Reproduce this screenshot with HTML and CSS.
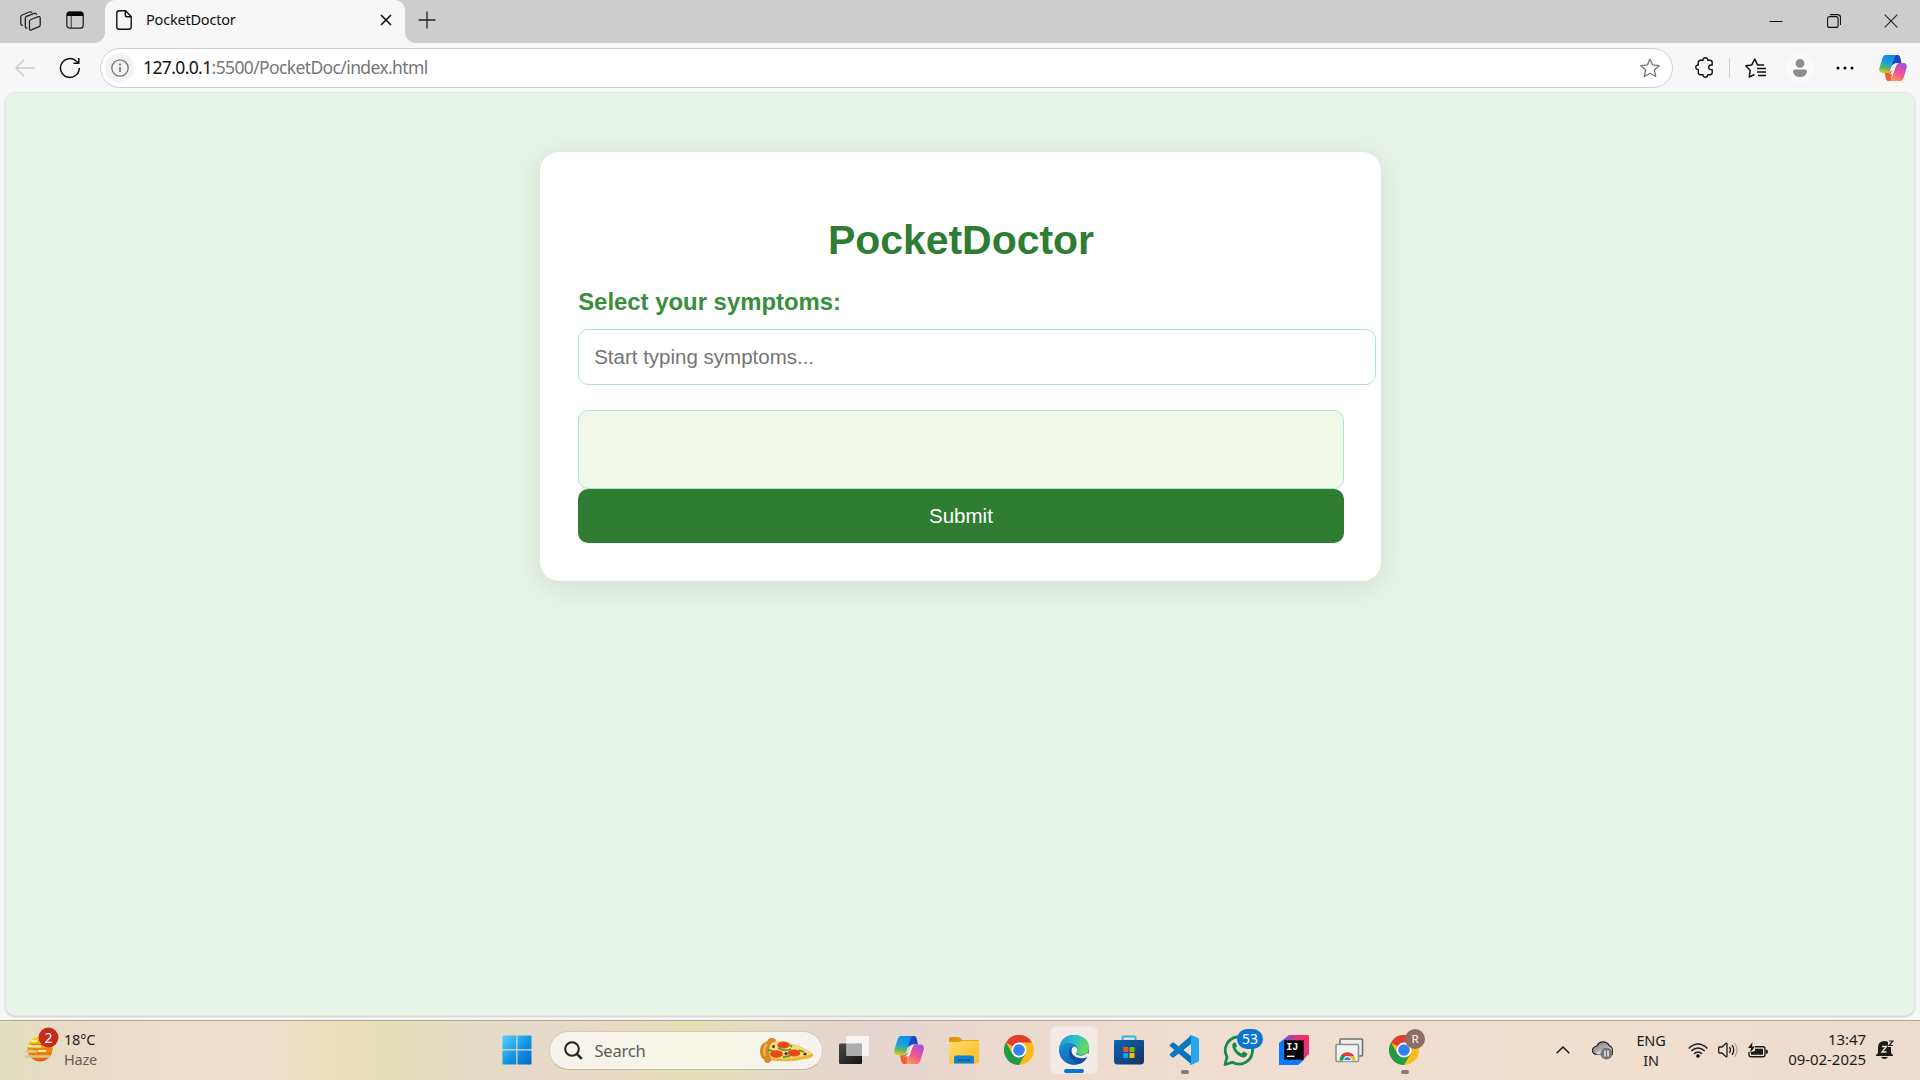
FILE: index.html
```html
<!DOCTYPE html>
<html lang="en">
<head>
<meta charset="utf-8">
<title>PocketDoctor</title>
<link rel="stylesheet" href="styles.css">
</head>
<body>
<svg class="defs" aria-hidden="true">
  <defs>
    <linearGradient id="cpBlue" x1="0.4" y1="0" x2="0.2" y2="1"><stop offset="0" stop-color="#0f8bea"/><stop offset=".4" stop-color="#1ba0dc"/><stop offset=".7" stop-color="#55b66c"/><stop offset="1" stop-color="#f0cd14"/></linearGradient>
    <linearGradient id="cpPink" x1="0.8" y1="0" x2="0.3" y2="1"><stop offset="0" stop-color="#a04fe8"/><stop offset=".5" stop-color="#ee5096"/><stop offset="1" stop-color="#fb9658"/></linearGradient>
    <linearGradient id="win" x1="0" y1="0" x2="1" y2="1"><stop offset="0" stop-color="#52d3fb"/><stop offset=".5" stop-color="#1798e5"/><stop offset="1" stop-color="#0067c9"/></linearGradient>
    <linearGradient id="sun" x1="0" y1="0" x2="0" y2="1"><stop offset="0" stop-color="#ffd400"/><stop offset="1" stop-color="#e85c08"/></linearGradient>
    <linearGradient id="fold" x1="0" y1="0" x2="1" y2="1"><stop offset="0" stop-color="#ffdc70"/><stop offset="1" stop-color="#fbbb1e"/></linearGradient>
    <linearGradient id="edgeTop" x1="0" y1="0" x2="1" y2="0.4"><stop offset="0" stop-color="#168fd2"/><stop offset=".5" stop-color="#2bbfd3"/><stop offset="1" stop-color="#63dc57"/></linearGradient>
    <linearGradient id="edgeLow" x1="0" y1="0" x2="0.6" y2="1"><stop offset="0" stop-color="#1c9ee4"/><stop offset="1" stop-color="#0d5fae"/></linearGradient>
    <linearGradient id="store" x1="0" y1="0" x2="1" y2="1"><stop offset="0" stop-color="#0d66b8"/><stop offset="1" stop-color="#17305f"/></linearGradient>
    <linearGradient id="ij" x1="0" y1="0.7" x2="1" y2="0.1"><stop offset="0" stop-color="#087cfa"/><stop offset=".35" stop-color="#4a61d8"/><stop offset=".7" stop-color="#e9307c"/><stop offset="1" stop-color="#fb2c62"/></linearGradient>
    <linearGradient id="dark" x1="0" y1="0" x2="1" y2="1"><stop offset="0" stop-color="#484848"/><stop offset="1" stop-color="#151515"/></linearGradient>
    <linearGradient id="cloud" x1="0" y1="0" x2="1" y2="1"><stop offset="0" stop-color="#777"/><stop offset="1" stop-color="#ddd"/></linearGradient>
    <symbol id="copilot" viewBox="0 0 30 28">
      <path d="M17 0h3c2 0 2.600 1.500 3.200 4.200L24 8.500h-6l-5 3z" fill="#1949c8"/>
      <path d="M7 0h12c-1.800 0-2.600 2-3.200 4.500L12.500 15c-.900 3-2 4.300-4.500 4.300H4C.500 19.300-.400 16.800.500 13.500L3.500 3.700C4.300 1.300 5.300 0 7 0z" fill="url(#cpBlue)"/>
      <path d="M13 28h-3c-2 0-2.600-1.800-3.200-4.500L6 19.200h3c2.500 0 3.500-2 5-3z" fill="#f26334"/>
      <path d="M23 28H11c1.800 0 2.600-2 3.200-4.500L17.500 13c.900-3 2-4.500 4.500-4.500h4c3.500 0 4.400 2.500 3.500 5.800l-3 10C25.700 26.700 24.700 28 23 28z" fill="url(#cpPink)"/>
      <path d="M17.500 10q1-1.500 3.500-1.500-2 1-3 4l-2 6q-.800 2-3 2h-2q2-.500 3-4z" fill="#f6ece8"/>
    </symbol>
    <symbol id="chrome" viewBox="0 0 30 30">
      <circle cx="15" cy="15" r="15" fill="#fbbc16"/>
      <path d="M15 15L2 7.500A15 15 0 0 1 28 7.500H15z" fill="#e33b2e"/>
      <path d="M2 7.500A15 15 0 0 0 15 30L21.500 18.700 8.500 18.700z" fill="#229a4c"/>
      <circle cx="15" cy="15" r="7.500" fill="#fff"/><circle cx="15" cy="15" r="5.800" fill="#3181ee"/>
    </symbol>
  </defs>
</svg>

<div class="screen">
  <header class="tabstrip">
    <svg class="workspaces" width="21" height="20" viewBox="0 0 21 20"><g fill="none" stroke="#222" stroke-width="1.300" stroke-linejoin="round" stroke-linecap="round"><path d="M11 8.500l7.300-2.800q1.900-.600 1.900 1.200v7q0 1.300-1.200 1.800l-7.500 3.200q-2 .700-2-1.300v-7.200q0-1.400 1.500-1.900z"/><path d="M6.800 17q-1.500 0-1.500-1.800V7.500q0-1.600 1.200-2.200l7.800-3q1.700-.500 2.200 1"/><path d="M2.500 14.300Q.800 14 .800 12.500V6q0-1.400 1.400-2L9.500 1q1.500-.500 2.200.3"/></g></svg>
    <svg class="tabactions" width="18" height="18" viewBox="0 0 18 18"><rect x=".8" y=".8" width="16.400" height="16.400" rx="3" fill="none" stroke="#222" stroke-width="1.300"/><path d="M1 5V3q0-2 2-2h12q2 0 2 2v2z" fill="#000"/><path d="M5.200 5v12" stroke="#333"/></svg>
    <div class="tab">
      <svg width="16" height="20" viewBox="0 0 16 20"><path d="M3 .800h6.500L15.200 6.500V17q0 2.200-2.200 2.200H3Q.800 19.200.800 17V3Q.800.800 3 .800zM9.300 1v4.200q0 1.500 1.500 1.500H15" fill="none" stroke="#111" stroke-width="1.400"/></svg>
      <span class="tab-title">PocketDoctor</span>
      <svg width="12" height="12" viewBox="0 0 12 12"><path d="M1 1l10 10M11 1L1 11" stroke="#111" stroke-width="1.600"/></svg>
    </div>
    <svg class="plus" width="18" height="18" viewBox="0 0 18 18"><path d="M9 .500v17M.500 9h17" stroke="#222" stroke-width="1.300"/></svg>
    <div class="window-controls">
      <svg width="14" height="14" viewBox="0 0 14 14"><path d="M.500 7.500h13" stroke="#111"/></svg>
      <svg width="14" height="14" viewBox="0 0 14 14"><rect x=".6" y="2.600" width="10.500" height="10.800" rx="2" fill="none" stroke="#111" stroke-width="1.100"/><path d="M3 .600h7.500q3 0 3 3V11" fill="none" stroke="#111" stroke-width="1.100"/></svg>
      <svg width="14" height="14" viewBox="0 0 14 14"><path d="M.700.700l12.600 12.600M13.300.700L.700 13.300" stroke="#222" stroke-width="1.100"/></svg>
    </div>
  </header>

  <nav class="toolbar">
    <svg class="back" width="20" height="18" viewBox="0 0 20 18"><path d="M9 .700L1 9l8 8.300M1 9h19" fill="none" stroke="#cbcbcb" stroke-width="1.400"/></svg>
    <svg class="reload" width="22" height="22" viewBox="0 0 22 22"><path d="M20.300 11a9.400 9.400 0 1 1-2.600-6.500L19.500 6" fill="none" stroke="#111" stroke-width="1.500"/><path d="M19.800 1v5.300h-5.300" fill="none" stroke="#111" stroke-width="1.500"/></svg>
    <div class="address">
      <span class="site-info"><svg width="18" height="18" viewBox="0 0 18 18"><circle cx="9" cy="9" r="8.200" fill="none" stroke="#747474" stroke-width="1.300"/><path d="M9 8v5" stroke="#666" stroke-width="1.500"/><circle cx="9" cy="5.500" r="1" fill="#666"/></svg></span>
      <span class="url"><b>127.0.0.1</b>:5500/PocketDoc/index.html</span>
      <svg width="20" height="20" viewBox="0 0 20 20"><path d="M10 1l2.700 5.900 6.500.800-4.800 4.400 1.300 6.400L10 15.300l-5.700 3.200 1.300-6.400L.800 7.700l6.500-.800z" fill="none" stroke="#777" stroke-width="1.300" stroke-linejoin="round"/></svg>
    </div>
    <svg class="extensions" width="20" height="21" viewBox="0 0 20 21"><path d="M5.500 3.300H8Q7.800.800 10.300.800t2.400 2.500H15q2.200 0 2.200 2.200V8H16q-2.300 0-2.300 2.300T16 12.600h1.200v3q0 2.200-2.200 2.200h-2.300q0 2.400-2.400 2.400T8 17.800H5.500q-2.200 0-2.200-2.200v-3Q.800 12.600.800 10.300T3.300 8V5.500q0-2.200 2.200-2.200z" fill="none" stroke="#111" stroke-width="1.400" stroke-linejoin="round"/></svg>
    <i class="divider"></i>
    <svg class="favorites" width="21" height="20" viewBox="0 0 21 20"><path d="M9.500 16.500L4.200 19l1-6.400L.800 7.800l6-.900L9.800 1l2.800 5.900h6.500M12 10.500h9M12 14h9M13 17.500h8" fill="none" stroke="#111" stroke-width="1.500" stroke-linejoin="round"/></svg>
    <span class="profile"><svg width="14" height="18" viewBox="0 0 14 18"><circle cx="7" cy="4.500" r="4.400" fill="#8d8d8d"/><path d="M2 10.500h10q2 0 2 2Q13 18 7 18T0 12.500q0-2 2-2z" fill="#8d8d8d"/></svg></span>
    <svg class="more" width="18" height="4" viewBox="0 0 18 4"><circle cx="2" cy="2" r="1.500"/><circle cx="9" cy="2" r="1.500"/><circle cx="16" cy="2" r="1.500"/></svg>
    <svg class="copilot" width="28" height="26"><use href="#copilot"/></svg>
  </nav>

  <main class="page">
    <section class="card">
      <h1>PocketDoctor</h1>
      <label for="symptom">Select your symptoms:</label>
      <input id="symptom" type="text" placeholder="Start typing symptoms...">
      <div class="selected"></div>
      <button type="button">Submit</button>
    </section>
  </main>

  <footer class="taskbar">
    <div class="weather">
      <svg width="35" height="36" viewBox="0 0 35 36"><circle cx="15" cy="22" r="12.500" fill="url(#sun)"/><path d="M7 14h4M4 19.300h11M14 24h6M4 24h4" stroke="#f9e8a6" stroke-width="2.400" stroke-linecap="round"/><path d="M6 17.500h13M3 22h25M8 26h18" stroke="#d97913" stroke-width="1"/><path d="M1 24.500h10M1 29.500h23" stroke="#dbc38b" stroke-width="2.400" stroke-linecap="round"/><circle cx="23.500" cy="10.500" r="10" fill="#c42b1c"/><text x="23.500" y="15.500" class="badge-text">2</text></svg>
      <div class="stack"><span>18°C</span><span class="dim">Haze</span></div>
    </div>

    <div class="apps">
      <span class="app"><svg width="30" height="30" viewBox="0 0 30 30"><path d="M1.500.500H14.300V14.300H.500V1.500q0-1 1-1zM15.500.500H28.500q1 0 1 1V14.300H15.500zM.500 15.500H14.300V29.500H1.500q-1 0-1-1zM15.500 15.500H29.500V28.500q0 1-1 1H15.500z" fill="url(#win)"/></svg></span>
      <div class="search">
        <svg width="19" height="19" viewBox="0 0 19 19"><circle cx="8" cy="8" r="6.800" fill="none" stroke="#222" stroke-width="2"/><path d="M12.800 12.800l5 5" stroke="#222" stroke-width="2.400"/></svg>
        <span>Search</span>
        <svg width="55" height="27" viewBox="0 0 55 27"><path d="M7 4Q35 3 54 17q1 3-5 4.500Q30 26 8 23z" fill="#f0b334"/><path d="M9 4Q35 4 53 17q-12 4-27 4.500Q14 22 8 21 6 12 9 4z" fill="#fbdc78"/><path d="M13 1q4 0 4 4-5-.500-6 4-2 8 1 12 1 4-3 5-4 0-4-4-4-1-4-8Q1 6 8 5q1-4 5-4z" fill="#d88924"/><path d="M8 7q-4 4-2 12" stroke="#f4b85b" stroke-width="2" fill="none"/><g fill="#e8481a"><ellipse cx="24.500" cy="8" rx="6.200" ry="3.500"/><ellipse cx="17.500" cy="17" rx="6.500" ry="3.800"/><ellipse cx="35" cy="16" rx="6.500" ry="3.500"/></g><path d="M19 11q6 4 13 1M24 20l7-1M9 13l5 1M40 13l5 2M31 8l2 2" stroke="#569b24" stroke-width="1.800" fill="none"/><g fill="#493052"><circle cx="14.500" cy="9.500" r="1.500"/><circle cx="27" cy="16.500" r="1.600"/><circle cx="46" cy="17" r="1.600"/></g></svg>
      </div>
      <span class="app"><svg width="30" height="28" viewBox="0 0 30 28"><rect y="7.500" width="23" height="20.500" rx="1.200" fill="url(#dark)"/><rect x="7.300" width="22.700" height="20" rx="1.200" fill="#fcfcfc" opacity=".8"/><path d="M7.300 7.500H23V20H7.300z" fill="#999" opacity=".65"/></svg></span>
      <span class="app"><svg width="30" height="28"><use href="#copilot"/></svg></span>
      <span class="app"><svg width="30" height="28" viewBox="0 0 30 28"><path d="M0 6V2.500Q0 1 1.500 1H9q1 0 1.800.800L13 4h15.500Q30 4 30 5.500V8H0z" fill="#db9b08"/><path d="M0 6h9q1.500 0 2.500-.700T14 4.700h14.500q1.500 0 1.500 1.500V26q0 1.500-1.500 1.500h-27Q0 27.500 0 26z" fill="url(#fold)"/><path d="M5 27.500V22q0-2.500 2.500-2.500h15Q25 19.500 25 22v5.500z" fill="#1180d2"/><path d="M8.500 24h13" stroke="#0a5795" stroke-width="1.400"/></svg></span>
      <span class="app"><svg width="30" height="30"><use href="#chrome"/></svg></span>
      <span class="app"><span class="tile"><svg width="30" height="30" viewBox="0 0 30 30"><circle cx="15" cy="15" r="15" fill="url(#edgeLow)"/><path d="M.300 12.500Q2.500 0 15 0q15 1 15 12.500c0 6.500-6 8.500-10.500 7q-2.500-1-1-3 1.500-2.500-.500-5Q15 8 10 8 3.500 8 .300 12.500z" fill="url(#edgeTop)"/><path d="M13 11.500Q8.500 16 11 21.500 14 28 21 28.700 26 26.500 28.300 22q-2 1-5 1.300-7 .500-10-4.500-1.800-3.500-.300-7.300z" fill="#124f98"/><path d="M14.500 11.500q4 0 4 3.500 0 1-.800 2.200-1.200 2 1.300 3 5 1.500 9.500-2.200L30 19q-.500 2-1.500 3-4.500 2-9 .800-7-1.800-7-7.300 0-2.500 2-4z" fill="#f5ebe6"/></svg><i class="bar"></i></span></span>
      <span class="app"><svg width="30" height="30" viewBox="0 0 30 30"><path d="M8.500 6V2.500Q8.500 1.500 9.500 1.500h11q1 0 1 1V6" fill="none" stroke="#28b6ee" stroke-width="2"/><path d="M1 5h28q1 0 1 1v20q0 3.500-3.500 3.500h-23Q0 29.500 0 26V6q0-1 1-1z" fill="url(#store)"/><path d="M9.300 12h5v5h-5z" fill="#f25022"/><path d="M15.500 12h5v5h-5z" fill="#7fba00"/><path d="M9.300 18h5v5h-5z" fill="#00a4ef"/><path d="M15.500 18h5v5h-5z" fill="#ffb900"/></svg></span>
      <span class="app running"><svg width="30" height="30" viewBox="0 0 30 30"><path d="M1 9.800l2-2q1-.700 2 0L22 21v8L.800 11q-.600-.700.200-1.200z" fill="#0873b8"/><path d="M.800 19L22 .500V9L5 22.300q-1 .700-2 0l-2-2q-.800-.700-.200-1.300z" fill="#0878c0"/><path d="M22 0l7 3q1 .500 1 1.700v20.500q0 1.300-1 1.800l-7 3q-1 0-2-1 2 1 2-1V2q0-2-2-1 1-1 2-1z" fill="#25a7f0"/></svg></span>
      <span class="app"><svg width="40" height="37" viewBox="0 0 40 37" class="whatsapp"><path d="M2 35.500l2-7.500a13.600 13.600 0 1 1 5.300 5.300z" fill="none" stroke="#178c50" stroke-width="2.800" stroke-linejoin="round"/><path d="M11.500 15q-2 2-1 5 3 8 10 10 4 .500 5-4l-4-2-2 2.200q-4-1.700-6-5.700l1.500-1.800-1.500-3.700z" fill="#178c50" transform="translate(-1 -1.500)"/><rect x="14" y="0" width="26" height="20" rx="10" fill="#0877d4"/><text x="27" y="15.200" class="badge-text">53</text></svg></span>
      <span class="app"><svg width="30" height="30" viewBox="0 0 30 30"><path d="M10 0h19q1 0 1 1v18L19 30H1q-1 0-1-1V8z" fill="url(#ij)"/><path d="M0 8l5.300-1.500V25H25l-6 5H1q-1 0-1-1z" fill="#087cfa"/><path d="M5.300 5.300h19.400v19.400H5.300z"/><text x="7.200" y="15" class="ij-text">IJ</text><path d="M8 21.300h7.500" stroke="#fff" stroke-width="1.400"/></svg></span>
      <span class="app"><svg width="29" height="25" viewBox="0 0 29 25"><rect x="5" y="1" width="22.500" height="17" rx="1" fill="#eee" stroke="#707070" stroke-width="1.600"/><rect x="1" y="6.500" width="22.500" height="17" rx="1" fill="#f4f4f4" stroke="#909090" stroke-width="1.600"/><path d="M4.500 22.600a8 8 0 0 1 4-6.800l3.800 6.800z" fill="#229a4c"/><path d="M6 17.500a8 8 0 0 1 13.500 1H12z" fill="#e33b2e"/><path d="M12 18.500h7.500q1 2 .800 4.100H12z" fill="#fbbc16"/><path d="M8.500 22.700a4 4 0 0 1 8 0z" fill="#3181ee" stroke="#fff"/></svg></span>
      <span class="app running"><svg width="36" height="36" viewBox="0 0 36 36" class="chrome-profile"><use href="#chrome" x="0" y="6" width="30" height="30"/><circle cx="26" cy="10" r="10" fill="#8d6e63"/><text x="26" y="14.300" class="profile-text">R</text></svg></span>
    </div>

    <div class="tray">
      <svg class="chevron" width="14" height="8" viewBox="0 0 14 8"><path d="M.700 7.300L7 1l6.300 6.300" fill="none" stroke="#1c1c1c" stroke-width="1.500"/></svg>
      <svg class="cloud" width="21" height="19" viewBox="0 0 21 19"><path d="M5 13.500q-4.500-.500-4.500-4T5 5Q6.500.800 11 .800T17.500 5q2.500.500 3 4v4.500z" fill="url(#cloud)" stroke="#222" stroke-width="1.200"/><path d="M4 12l10-6 5.800 1.500v6H5z" fill="#d6d6d6"/><circle cx="14.500" cy="12.500" r="6" fill="#777"/><path d="M13 9.500v6M16 9.500v6" stroke="#fff" stroke-width="1.300"/></svg>
      <div class="stack language"><span>ENG</span><span>IN</span></div>
      <svg class="wifi" width="20" height="15" viewBox="0 0 20 15"><g fill="none" stroke="#1c1c1c" stroke-width="1.400"><path d="M.600 5.400q9.400-8.800 18.800 0"/><path d="M3.300 8.100q6.700-6.200 13.400 0"/><path d="M6 10.800q4-3.600 8 0"/></g><circle cx="10" cy="13" r="1.800"/></svg>
      <svg class="speaker" width="20" height="16" viewBox="0 0 20 16"><path d="M.700 5.700Q.700 5 1.500 5H4l3.700-3.500Q9 .700 9 2v12q0 1.300-1.300.500L4 11H1.500q-.800 0-.800-.700zM11.500 5.200q2 2.800 0 5.600M14 3.200q3.500 4.800 0 9.600" fill="none" stroke="#1c1c1c" stroke-width="1.300"/><path d="M16.500 1q5 7 0 14" fill="none" stroke="#aaa39b" stroke-width="1.200"/></svg>
      <svg class="battery" width="20" height="16" viewBox="0 0 20 16"><path d="M7 4.700h8q2 0 2 2v6q0 2-2 2H3q-2 0-2-2V10" fill="none" stroke="#1c1c1c" stroke-width="1.400"/><path d="M7 6.700h8v6H3V10l4-1zM18 7.500q2 0 2 2.200t-2 2.200zM4.500 0L0 6h3L2 11l5-6.500H4z" fill="#1c1c1c"/></svg>
      <div class="stack clock"><span>13:47</span><span>09-02-2025</span></div>
      <svg class="bell" width="18" height="20" viewBox="0 0 18 20"><path d="M0 15q2-1 2-3V8q0-7 6.500-7 2 0 3.500 1v5h3v5q0 2 2 3v1H0zM5 17h7q-1 2-3.500 2T5 17z" fill="#1c1c1c"/><path d="M6 6.500h4.500L6 12h4.500" fill="none" stroke="#f1dece" stroke-width="1.400"/><path d="M13 1h4l-4 4.500h4" fill="none" stroke="#1c1c1c" stroke-width="1.200"/></svg>
    </div>
  </footer>
</div>
</body>
</html>
```
FILE: styles.css
```css
* { box-sizing: border-box; }
body { margin: 0; overflow: hidden; font-family: "Noto Sans", "Open Sans", sans-serif; }
svg { display: block; flex: none; }
.defs { position: absolute; width: 0; height: 0; }
.screen { width: 1920px; height: 1080px; display: flex; flex-direction: column; background: #f7f7f7; }

.tabstrip { height: 43px; flex: none; display: flex; align-items: center; background: #cdcdcd; }
.workspaces { margin: -2px 0 0 20px; }
.tabactions { margin: -3px 0 0 25px; }
.tab { position: relative; width: 300px; height: 43px; margin-left: 21px; padding: 0 13px 3px 11px; display: flex; align-items: center; background: #f7f7f7; border-radius: 10px 10px 0 0; }
.tab::before, .tab::after { content: ""; position: absolute; bottom: 0; width: 10px; height: 10px; }
.tab::before { left: -10px; background: radial-gradient(circle at 0 0, transparent 9.5px, #f7f7f7 10px); }
.tab::after { right: -10px; background: radial-gradient(circle at 100% 0, transparent 9.5px, #f7f7f7 10px); }
.tab-title { flex: 1; margin: -2px 0 0 14px; font-size: 14.5px; letter-spacing: -0.2px; color: #111; }
.plus { margin: -4px 0 0 13px; }
.window-controls { margin-left: auto; padding: 0 22px 1px 0; display: flex; gap: 43.5px; }

.toolbar { height: 49px; flex: none; display: flex; align-items: center; }
.back { margin-left: 15px; }
.reload { margin-left: 24px; }
.address { width: 1573px; height: 40px; margin-left: 19px; padding: 0 12px 0 4px; display: flex; align-items: center; background: #fff; border: 1px solid #cfcfcf; border-radius: 20px; }
.site-info { width: 29px; height: 29px; display: grid; place-items: center; background: #f3f3f3; border-radius: 50%; }
.url { flex: 1; margin: -1px 0 0 9px; font-size: 17.5px; letter-spacing: -0.62px; color: #767676; }
.url b { font-weight: 400; color: #111; }
.extensions { margin-left: 22px; }
.divider { width: 1px; height: 20px; margin-left: 14px; background: #ccc; }
.favorites { margin-left: 15px; }
.profile { width: 28px; height: 28px; margin-left: 20px; display: grid; place-items: center; background: #fafafa; border: 1px solid #fff; border-radius: 50%; }
.more { margin-left: 22px; }
.copilot { margin-left: 25px; }

.page { height: 924px; flex: none; margin: 0 5px; padding-top: 59px; background: #e9f4e8; border: 1px solid #e2e8e2; border-radius: 10px; box-shadow: 0 1px 2px #ccc; }
.card { width: 841.5px; height: 429px; margin: 0 auto 0 533.7px; padding: 63.5px 37.5px 0 38.5px; background: #fff; border-radius: 19px; box-shadow: 0 5px 29px rgba(0,0,0,.1); font-family: "Liberation Sans", Arial, sans-serif; }
.card h1 { margin: 0; font-size: 41px; line-height: 48px; letter-spacing: -0.05px; text-align: center; color: #2e7d32; }
.card label { display: block; margin-top: 24.5px; font-size: 23.9px; line-height: 28px; font-weight: 700; color: #388e3c; }
.card input { display: block; width: 798px; height: 56px; margin-top: 13px; padding: 0 15px 1px; font: 20.5px "Liberation Sans", Arial, sans-serif; background: #fff; border: 1px solid #b2dfdb; border-radius: 10px; outline: 0; }
.card input::placeholder { color: #757575; }
.selected { height: 79px; margin-top: 25px; background: #f1f7e9; border: 1px solid #b2dfdb; border-radius: 10px; }
.card button { display: block; width: 100%; height: 54px; padding: 0; border: 0; border-radius: 10px; background: #2e7d32; color: #fff; font: 20.5px "Liberation Sans", Arial, sans-serif; }

.taskbar { height: 60px; margin-top: 4px; flex: none; display: flex; border-top: 1px solid #aca69f; background: linear-gradient(90deg, #e2dfc0 0, #e9dcc6 80px, #efdfcf 190px, #efdfce 260px, #ebdfba 340px, #e3e0b8 390px, #e3dcc5 460px, #e5dac9 530px, #e8dac4 610px, #e4e0b7 690px, #e4dac7 780px, #e5d5d0 870px, #ecd9cf 1000px, #efdecf 1200px, #f0dfcf 1600px, #ecdccd 1920px); color: #1c1c1c; }
.weather { width: 489.5px; padding: 6px 0 0 25px; display: flex; gap: 4px; }
.stack { display: flex; flex-direction: column; font-size: 14.5px; line-height: 20px; letter-spacing: -0.2px; }
.dim { color: #666057; }
.weather .stack { padding-top: 2px; }
.badge-text { fill: #fff; font-size: 14px; text-anchor: middle; }
.ij-text { fill: #fff; font: bold 10px "Liberation Mono", monospace; }
.profile-text { fill: #fff; font-size: 11.5px; text-anchor: middle; }
.apps { height: 58px; display: flex; align-items: center; }
.app { position: relative; width: 55px; height: 58px; display: grid; place-items: center; }
.search { width: 274px; height: 39px; margin: 0 4px; padding: 0 8px 0 14px; display: flex; align-items: center; border-radius: 20px; border: 1px solid #d3ccbf; border-bottom-color: #bcb5a6; background: linear-gradient(90deg, #f6f3ee, #f8f6e6 55%, #f6f3ef); color: #5c5b57; }
.search span { flex: 1; margin-left: 12px; font-size: 16.5px; letter-spacing: -0.2px; }
.tile { position: relative; width: 48px; height: 48px; display: grid; place-items: center; background: #f5ebe6; border: 1px solid #eee3dc; border-radius: 6px; }
.bar { position: absolute; left: 13px; bottom: 0; width: 20px; height: 4px; border-radius: 2px; background: #0877d4; }
.running::after { content: ""; position: absolute; left: 24px; bottom: 5px; width: 8px; height: 4px; border-radius: 2px; background: #857d75; }
.whatsapp { position: relative; left: 4px; top: -3px; }
.chrome-profile { position: relative; left: 3px; top: -3px; }
.tray { height: 58px; margin-left: 124.5px; display: flex; align-items: center; }
.cloud { margin-left: 22px; }
.language { width: 40px; margin: 0 0 1px 18px; text-align: center; }
.wifi { margin-left: 17px; }
.speaker { margin-left: 10px; }
.battery { margin-left: 10px; }
.clock { width: 86px; margin: 0 0 2px 12px; text-align: right; }
.clock span { font-size: 15px; letter-spacing: -0.05px; }
.bell { margin-left: 10px; }
```
